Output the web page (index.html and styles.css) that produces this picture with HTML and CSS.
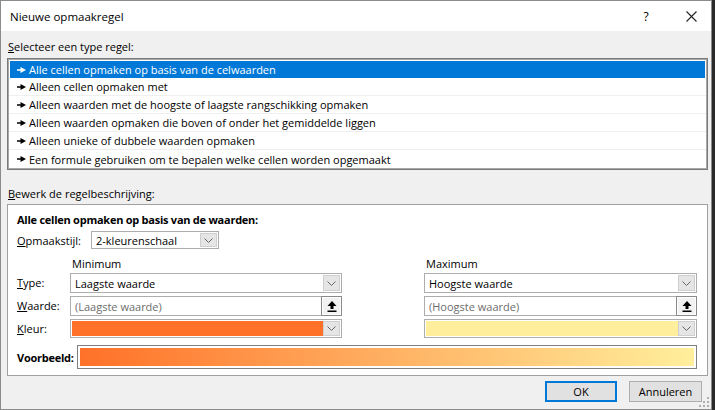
FILE: index.html
```html
<!DOCTYPE html>
<html lang="nl">
<head>
<meta charset="utf-8">
<title>Nieuwe opmaakregel</title>
<link rel="stylesheet" href="styles.css">
</head>
<body>
<div class="dialog">
  <div class="titlebar">
    <span class="title">Nieuwe opmaakregel</span>
    <span class="tb-help">?</span>
    <span class="tb-close"><svg width="11" height="11" viewBox="0 0 11 11"><path d="M0.5 0.5L10.5 10.5M10.5 0.5L0.5 10.5" stroke="#222" stroke-width="1.1" fill="none"/></svg></span>
  </div>
  <div class="body">
    <div class="sect-label"><u>S</u>electeer een type regel:</div>
    <div class="listbox">
      <div class="row selected"><svg class="arr" width="9" height="6" viewBox="0 0 9 6"><path d="M0 2.3H3.5V0L9 3L3.5 6V3.7H0Z" fill="currentColor"/></svg>Alle cellen opmaken op basis van de celwaarden</div>
      <div class="row"><svg class="arr" width="9" height="6" viewBox="0 0 9 6"><path d="M0 2.3H3.5V0L9 3L3.5 6V3.7H0Z" fill="currentColor"/></svg>Alleen cellen opmaken met</div>
      <div class="row"><svg class="arr" width="9" height="6" viewBox="0 0 9 6"><path d="M0 2.3H3.5V0L9 3L3.5 6V3.7H0Z" fill="currentColor"/></svg>Alleen waarden met de hoogste of laagste rangschikking opmaken</div>
      <div class="row"><svg class="arr" width="9" height="6" viewBox="0 0 9 6"><path d="M0 2.3H3.5V0L9 3L3.5 6V3.7H0Z" fill="currentColor"/></svg>Alleen waarden opmaken die boven of onder het gemiddelde liggen</div>
      <div class="row"><svg class="arr" width="9" height="6" viewBox="0 0 9 6"><path d="M0 2.3H3.5V0L9 3L3.5 6V3.7H0Z" fill="currentColor"/></svg>Alleen unieke of dubbele waarden opmaken</div>
      <div class="row last"><svg class="arr" width="9" height="6" viewBox="0 0 9 6"><path d="M0 2.3H3.5V0L9 3L3.5 6V3.7H0Z" fill="currentColor"/></svg>Een formule gebruiken om te bepalen welke cellen worden opgemaakt</div>
    </div>
    <div class="sect-label second"><u>B</u>ewerk de regelbeschrijving:</div>
    <div class="panel">
      <div class="heading">Alle cellen opmaken op basis van de waarden:</div>
      <div class="style-row">
        <span class="lbl"><u>O</u>pmaakstijl:</span>
        <div class="select small"><span class="val">2-kleurenschaal</span><span class="ddbtn"><svg width="9" height="5" viewBox="0 0 9 5"><path d="M0.5 0.5L4.5 4.5L8.5 0.5" stroke="#666" stroke-width="1" fill="none"/></svg></span></div>
      </div>
      <div class="grid">
        <span></span><span class="colhead">Minimum</span><span></span><span class="colhead">Maximum</span>

        <span class="lbl"><u>T</u>ype:</span>
        <div class="select"><span class="val">Laagste waarde</span><span class="ddbtn"><svg width="9" height="5" viewBox="0 0 9 5"><path d="M0.5 0.5L4.5 4.5L8.5 0.5" stroke="#666" stroke-width="1" fill="none"/></svg></span></div>
        <span></span>
        <div class="select"><span class="val">Hoogste waarde</span><span class="ddbtn"><svg width="9" height="5" viewBox="0 0 9 5"><path d="M0.5 0.5L4.5 4.5L8.5 0.5" stroke="#666" stroke-width="1" fill="none"/></svg></span></div>

        <span class="lbl"><u>W</u>aarde:</span>
        <div class="input"><span class="ph">(Laagste waarde)</span><span class="refbtn"><svg width="10" height="11" viewBox="0 0 10 11"><path d="M5 0L9.5 5H6.5V8H3.5V5H0.5Z" fill="#000"/><rect x="0.5" y="9.5" width="9" height="1.5" fill="#000"/></svg></span></div>
        <span></span>
        <div class="input"><span class="ph">(Hoogste waarde)</span><span class="refbtn"><svg width="10" height="11" viewBox="0 0 10 11"><path d="M5 0L9.5 5H6.5V8H3.5V5H0.5Z" fill="#000"/><rect x="0.5" y="9.5" width="9" height="1.5" fill="#000"/></svg></span></div>

        <span class="lbl"><u>K</u>leur:</span>
        <div class="select color"><span class="swatch min"></span><span class="ddbtn"><svg width="9" height="5" viewBox="0 0 9 5"><path d="M0.5 0.5L4.5 4.5L8.5 0.5" stroke="#666" stroke-width="1" fill="none"/></svg></span></div>
        <span></span>
        <div class="select color"><span class="swatch max"></span><span class="ddbtn"><svg width="9" height="5" viewBox="0 0 9 5"><path d="M0.5 0.5L4.5 4.5L8.5 0.5" stroke="#666" stroke-width="1" fill="none"/></svg></span></div>
      </div>
      <div class="preview-row">
        <span class="plbl">Voorbeeld:</span>
        <div class="preview"><div class="grad"></div></div>
      </div>
    </div>
    <div class="buttons">
      <button class="btn ok">OK</button>
      <button class="btn">Annuleren</button>
    </div>
  </div>
  <svg class="grip" width="10" height="10" viewBox="0 0 10 10"><g fill="#b0b0b0"><rect x="8" y="0" width="2" height="2"/><rect x="4" y="4" width="2" height="2"/><rect x="8" y="4" width="2" height="2"/><rect x="0" y="8" width="2" height="2"/><rect x="4" y="8" width="2" height="2"/><rect x="8" y="8" width="2" height="2"/></g></svg>
</div>
</body>
</html>
```

FILE: styles.css
```css
* { box-sizing: border-box; }
html, body { margin: 0; padding: 0; }
body {
  background: #2a2a2a;
  width: 715px;
  height: 410px;
  overflow: hidden;
  font-family: "Open Sans", "Liberation Sans", Arial, sans-serif;
  font-size: 11px;
  color: #000;
}
u { text-decoration: underline; text-underline-offset: 1px; }
.dialog {
  position: relative;
  width: 712px;
  height: 410px;
  border: 1px solid #8c8c8c;
  background: #f0f0f0;
  display: flex;
  flex-direction: column;
}
.titlebar {
  height: 30px;
  background: #fff;
  display: flex;
  align-items: center;
  padding-left: 9px;
  flex: none;
}
.title { flex: 1; font-size: 11.5px; }
.tb-help { width: 12px; text-align: center; margin-right: 34px; font-size: 12px; }
.tb-close { width: 11px; margin-right: 14px; display: flex; }
.body {
  flex: 1;
  padding: 0 3px 0 6px;
  display: flex;
  flex-direction: column;
}
.sect-label { height: 16px; line-height: 16px; margin-top: 8px; padding-left: 1px; }
.sect-label.second { margin-top: 16px; }
.listbox {
  margin-top: 3px;
  height: 112px;
  background: #fff;
  border: 1px solid #7a7a7a;
  box-shadow: inset 0 0 0 1px #a8a8a8;
  padding: 1px;
  display: flex;
  flex-direction: column;
}
.row {
  height: 18px;
  line-height: 17px;
  display: flex;
  align-items: center;
  padding-left: 8px;
  border-bottom: 1px solid #efefef;
  white-space: nowrap;
}
.row.last { border-bottom: none; }
.row.selected { background: #0078d7; color: #fff; margin: 1px 1px 0 1px; padding-left: 7px; height: 17px; border-bottom: none; }
.arr { margin-right: 3px; flex: none; }
.panel {
  margin-top: 2px;
  height: 172px;
  background: #fff;
  border: 1px solid #a0a0a0;
  padding: 7px 0 0 9px;
  display: flex;
  flex-direction: column;
}
.heading { font-weight: bold; height: 16px; line-height: 16px; letter-spacing: -0.25px; }
.style-row { display: flex; align-items: center; margin-top: 3px; height: 18px; }
.lbl { white-space: nowrap; }
.style-row .lbl { width: 74px; }
.select {
  height: 18px;
  border: 1px solid #adadad;
  background: #fff;
  display: flex;
  align-items: center;
  padding: 0 1px 0 4px;
}
.select.small { width: 128px; }
.select .val { flex: 1; white-space: nowrap; }
.ddbtn {
  width: 17px;
  height: 14px;
  background: #e5e5e5;
  border: 1px solid #cfcfcf;
  display: flex;
  align-items: center;
  justify-content: center;
  flex: none;
}
.grid {
  display: grid;
  grid-template-columns: 53px 272px 82px 273px;
  grid-template-rows: 18px 23px 23px 19px;
  margin-top: 6px;
  align-items: start;
}
.colhead { padding-left: 2px; line-height: 18px; }
.grid .lbl { line-height: 20px; }
.grid .select { height: 20px; }
.grid .ddbtn { height: 16px; }
.input {
  height: 20px;
  border: 1px solid #adadad;
  background: #fff;
  display: flex;
  align-items: center;
  padding-left: 4px;
}
.input .ph { flex: 1; color: #6d6d6d; }
.refbtn {
  width: 21px;
  height: 20px;
  margin: -1px -1px -1px 0;
  border: 1px solid #8a8a8a;
  box-shadow: inset 0 0 0 1px #fff;
  background: #f2f2f2;
  display: flex;
  align-items: center;
  justify-content: center;
  flex: none;
}
.grid .select.color { height: 19px; padding: 0 1px; }
.grid .select.color .ddbtn { height: 15px; }
.swatch { flex: 1; height: 15px; }
.swatch.min { background: #ff7128; }
.swatch.max { background: #ffef9c; }
.preview-row { display: flex; align-items: center; margin-top: 7px; height: 24px; }
.plbl { font-weight: bold; width: 60px; letter-spacing: -0.25px; }
.preview {
  width: 620px;
  height: 24px;
  border: 1px solid #808080;
  padding: 2px;
}
.grad { height: 100%; background: linear-gradient(to right, #ff7128, #ffef9c); }
.buttons {
  display: flex;
  justify-content: flex-end;
  gap: 12px;
  margin-top: 5px;
  padding-right: 6px;
}
.btn {
  font-family: inherit;
  font-size: 11px;
  color: #000;
  height: 21px;
  background: #e1e1e1;
  border: 1px solid #adadad;
  padding: 0;
  width: 73px;
}
.btn.ok { border: 2px solid #0078d7; width: 72px; }
.grip { position: absolute; right: 2px; bottom: 2px; }
```
